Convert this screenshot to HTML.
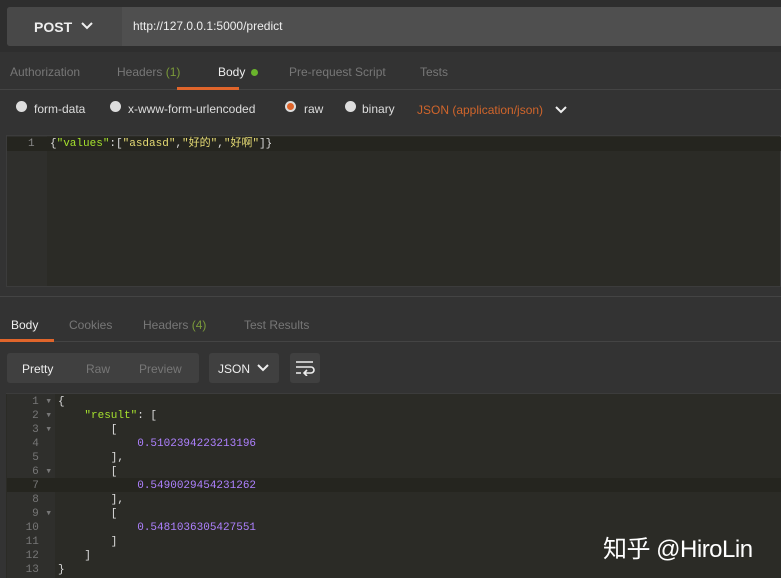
<!DOCTYPE html>
<html><head><meta charset="utf-8"><style>
*{margin:0;padding:0;box-sizing:border-box}
body{width:781px;height:578px;background:#333;font-family:"Liberation Sans","Noto Sans CJK SC",sans-serif;position:relative;overflow:hidden;color:#bbb}
.a{position:absolute;white-space:nowrap}
.mono{font-family:"Liberation Mono","Noto Sans CJK SC",monospace;font-size:11px;line-height:14px}
.rad{position:absolute;width:11px;height:11px;border-radius:50%;background:#ddd}
</style></head><body>
<div class="a" style="left:0;top:0;width:781px;height:52px;background:#2e2e2e"></div>
<div class="a" style="left:7px;top:7px;width:774px;height:39px;background:#4f4f4f;border-radius:3px 0 0 3px"></div>
<div class="a" style="left:7px;top:7px;width:115px;height:39px;background:#484848;border-radius:3px 0 0 3px"></div>
<div class="a" style="left:34px;top:19px;font-size:14px;color:#eee;font-weight:bold">POST</div>
<svg class="a" style="left:81px;top:22px" width="12" height="8"><path d="M1 1l5 5 5-5" stroke="#eee" stroke-width="2" fill="none"/></svg>
<div class="a" style="left:133px;top:19px;font-size:12px;color:#eee">http://127.0.0.1:5000/predict</div>

<div class="a" style="left:0;top:89px;width:781px;height:1px;background:#444"></div>
<div class="a" style="left:10px;top:65px;font-size:12px;color:#777">Authorization</div>
<div class="a" style="left:117px;top:65px;font-size:12px;color:#777">Headers <span style="color:#7a9a3a">(1)</span></div>
<div class="a" style="left:218px;top:65px;font-size:12px;color:#eee">Body</div>
<div class="a" style="left:251px;top:69px;width:7px;height:7px;border-radius:50%;background:#6ab42c"></div>
<div class="a" style="left:177px;top:87px;width:62px;height:3px;background:#e0652b"></div>
<div class="a" style="left:289px;top:65px;font-size:12px;color:#777">Pre-request Script</div>
<div class="a" style="left:420px;top:65px;font-size:12px;color:#777">Tests</div>

<div class="rad" style="left:16px;top:101px"></div>
<div class="a" style="left:34px;top:102px;font-size:12px;color:#ddd">form-data</div>
<div class="rad" style="left:110px;top:101px"></div>
<div class="a" style="left:128px;top:102px;font-size:12px;color:#ddd">x-www-form-urlencoded</div>
<div class="rad" style="left:285px;top:101px"><div style="margin:2px;width:7px;height:7px;border-radius:50%;background:#e0652b"></div></div>
<div class="a" style="left:304px;top:102px;font-size:12px;color:#ddd">raw</div>
<div class="rad" style="left:345px;top:101px"></div>
<div class="a" style="left:362px;top:102px;font-size:12px;color:#ddd">binary</div>
<div class="a" style="left:417px;top:103px;font-size:12px;color:#d0652b">JSON (application/json)</div>
<svg class="a" style="left:555px;top:106px" width="12" height="8"><path d="M1 1l5 5 5-5" stroke="#eee" stroke-width="2" fill="none"/></svg>

<div class="a" style="left:6px;top:135px;width:775px;height:152px;background:#2b2b26;border:1px solid #3c3c3c"></div>
<div class="a" style="left:7px;top:136px;width:40px;height:150px;background:#2f2f2c"></div>
<div class="a" style="left:7px;top:137px;width:774px;height:14px;background:#25251f"></div>
<div class="a mono" style="left:28px;top:137px;color:#888">1</div>
<div class="a mono" style="left:50px;top:137px;color:#ddd">{<span style="color:#a6e22e">"values"</span>:[<span style="color:#e6db74">"asdasd"</span>,<span style="color:#e6db74">"好的"</span>,<span style="color:#e6db74">"好啊"</span>]}</div>

<div class="a" style="left:0;top:296px;width:781px;height:1px;background:#444"></div>
<div class="a" style="left:0;top:341px;width:781px;height:1px;background:#444"></div>
<div class="a" style="left:11px;top:318px;font-size:12px;color:#eee">Body</div>
<div class="a" style="left:0;top:339px;width:54px;height:3px;background:#e0652b"></div>
<div class="a" style="left:69px;top:318px;font-size:12px;color:#777">Cookies</div>
<div class="a" style="left:143px;top:318px;font-size:12px;color:#777">Headers <span style="color:#7a9a3a">(4)</span></div>
<div class="a" style="left:244px;top:318px;font-size:12px;color:#777">Test Results</div>

<div class="a" style="left:7px;top:353px;width:192px;height:30px;background:#404040;border-radius:3px"></div>
<div class="a" style="left:22px;top:362px;font-size:12px;color:#eee">Pretty</div>
<div class="a" style="left:86px;top:362px;font-size:12px;color:#777">Raw</div>
<div class="a" style="left:139px;top:362px;font-size:12px;color:#777">Preview</div>
<div class="a" style="left:209px;top:353px;width:70px;height:30px;background:#404040;border-radius:3px"></div>
<div class="a" style="left:218px;top:362px;font-size:12px;color:#eee">JSON</div>
<svg class="a" style="left:257px;top:364px" width="12" height="8"><path d="M1 1l5 5 5-5" stroke="#eee" stroke-width="2" fill="none"/></svg>
<div class="a" style="left:290px;top:353px;width:30px;height:30px;background:#404040;border-radius:3px"></div>
<svg class="a" style="left:295px;top:360px" width="20" height="16"><path d="M1 2h17M1 7h15a3 3 0 0 1 0 6h-6M12 10l-3 3 3 3M1 13h5" stroke="#eee" stroke-width="1.6" fill="none"/></svg>

<div class="a" style="left:6px;top:393px;width:775px;height:185px;background:#2b2b26;border-top:1px solid #3c3c3c"></div>
<div class="a" style="left:7px;top:394px;width:48px;height:184px;background:#2f2f2c"></div>
<div class="a" style="left:7px;top:478px;width:774px;height:14px;background:#25251f"></div>
<div class="a mono" style="left:16px;top:395px;width:36px;color:#777;text-align:right;white-space:pre">1 ▾
2 ▾
3 ▾
4  
5  
6 ▾
7  
8  
9 ▾
10  
11  
12  
13  </div>
<div class="a mono" style="left:58px;top:395px;color:#ddd;white-space:pre">{
    <span style="color:#a6e22e">"result"</span>: [
        [
            <span style="color:#ae81ff">0.5102394223213196</span>
        ],
        [
            <span style="color:#ae81ff">0.5490029454231262</span>
        ],
        [
            <span style="color:#ae81ff">0.5481036305427551</span>
        ]
    ]
}</div>
<div class="a" style="left:603px;top:529px;font-size:24px;color:#fff;letter-spacing:-0.5px">知乎 @HiroLin</div>
</body></html>
